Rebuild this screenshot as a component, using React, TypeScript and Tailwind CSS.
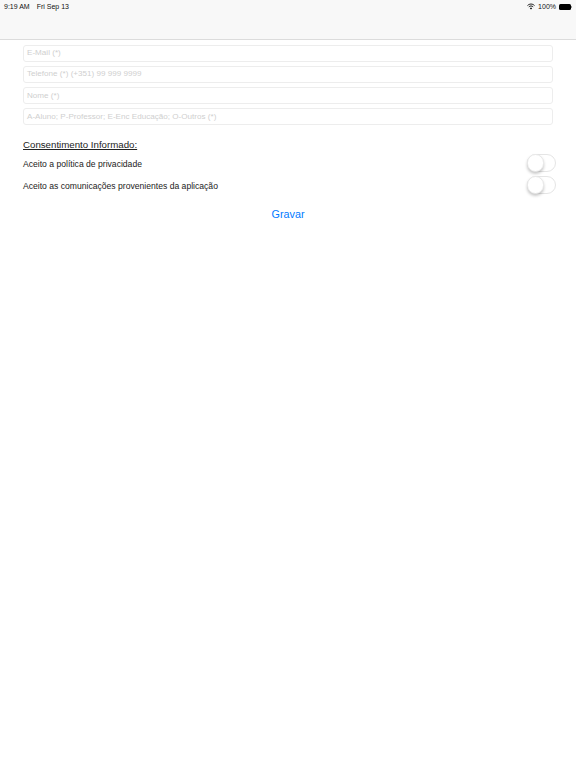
const fields = [
  'E-Mail (*)',
  'Telefone (*) (+351) 99 999 9999',
  'Nome (*)',
  'A-Aluno; P-Professor; E-Enc Educação; O-Outros (*)',
];

const consents = ['Aceito a política de privacidade', 'Aceito as comunicações provenientes da aplicação'];

function Toggle() {
  return (
    <div className="relative h-[18px] w-[29px] rounded-full border border-[#e5e5e5] bg-white">
      <div className="absolute left-[-1px] top-[-1px] h-[18px] w-[17px] rounded-full border border-[#e8e8e8] bg-white shadow-[0_2px_3px_rgba(0,0,0,0.22)]" />
    </div>
  );
}

export default function App() {
  return (
    <div className="flex min-h-[768px] flex-col bg-white font-['Liberation_Sans',sans-serif] text-black">
      {/* Status + nav bar */}
      <div className="h-[40px] border-b border-[#dcdcdc] bg-[#f8f8f8]">
        <div className="flex h-[12px] items-center justify-between pl-[4px] pr-[4px] pt-[1px] text-[7px] leading-none text-[#111]">
          <div className="flex gap-[7px]">
            <span>9:19 AM</span>
            <span>Fri Sep 13</span>
          </div>
          <div className="flex items-center gap-[3px]">
            <svg width="8" height="7" viewBox="0 0 16 13" fill="none" stroke="#111" strokeWidth="1.9">
              <path d="M1 4.6 C5 0.6 11 0.6 15 4.6" />
              <path d="M3.6 7.3 C6.2 4.8 9.8 4.8 12.4 7.3" />
              <path d="M8 12.6 L5.6 10 C7 8.8 9 8.8 10.4 10 Z" fill="#111" stroke="none" />
            </svg>
            <span>100%</span>
            <div className="flex items-center">
              <div className="h-[6px] w-[12px] rounded-[1.5px] bg-black" />
              <div className="h-[2px] w-[1px] bg-[#999]" />
            </div>
          </div>
        </div>
      </div>

      <div className="flex flex-col px-[23px] pt-[4.5px]">
        <div className="flex flex-col gap-[4.3px]">
          {fields.map(f => (
            <div
              key={f}
              className="flex h-[17px] items-center rounded-[3px] border border-[#ededed] pl-[3px] text-[8.1px] text-[#cfcfcf]"
            >
              {f}
            </div>
          ))}
        </div>

        <div className="mt-[13px] text-[9.7px] leading-[13px] text-[#222] underline">Consentimento Informado:</div>

        <div className="mt-[3px] flex flex-col gap-[4px]">
          {consents.map(c => (
            <div key={c} className="flex h-[18px] items-center justify-between text-[8.6px] text-[#222]">
              <span className="translate-y-[0.5px]">{c}</span>
              <div className="mr-[-3px]">
                <Toggle />
              </div>
            </div>
          ))}
        </div>

        <div className="mt-[13px] text-center text-[10.8px] leading-[14px] text-[#007aff]">Gravar</div>
      </div>
    </div>
  );
}
